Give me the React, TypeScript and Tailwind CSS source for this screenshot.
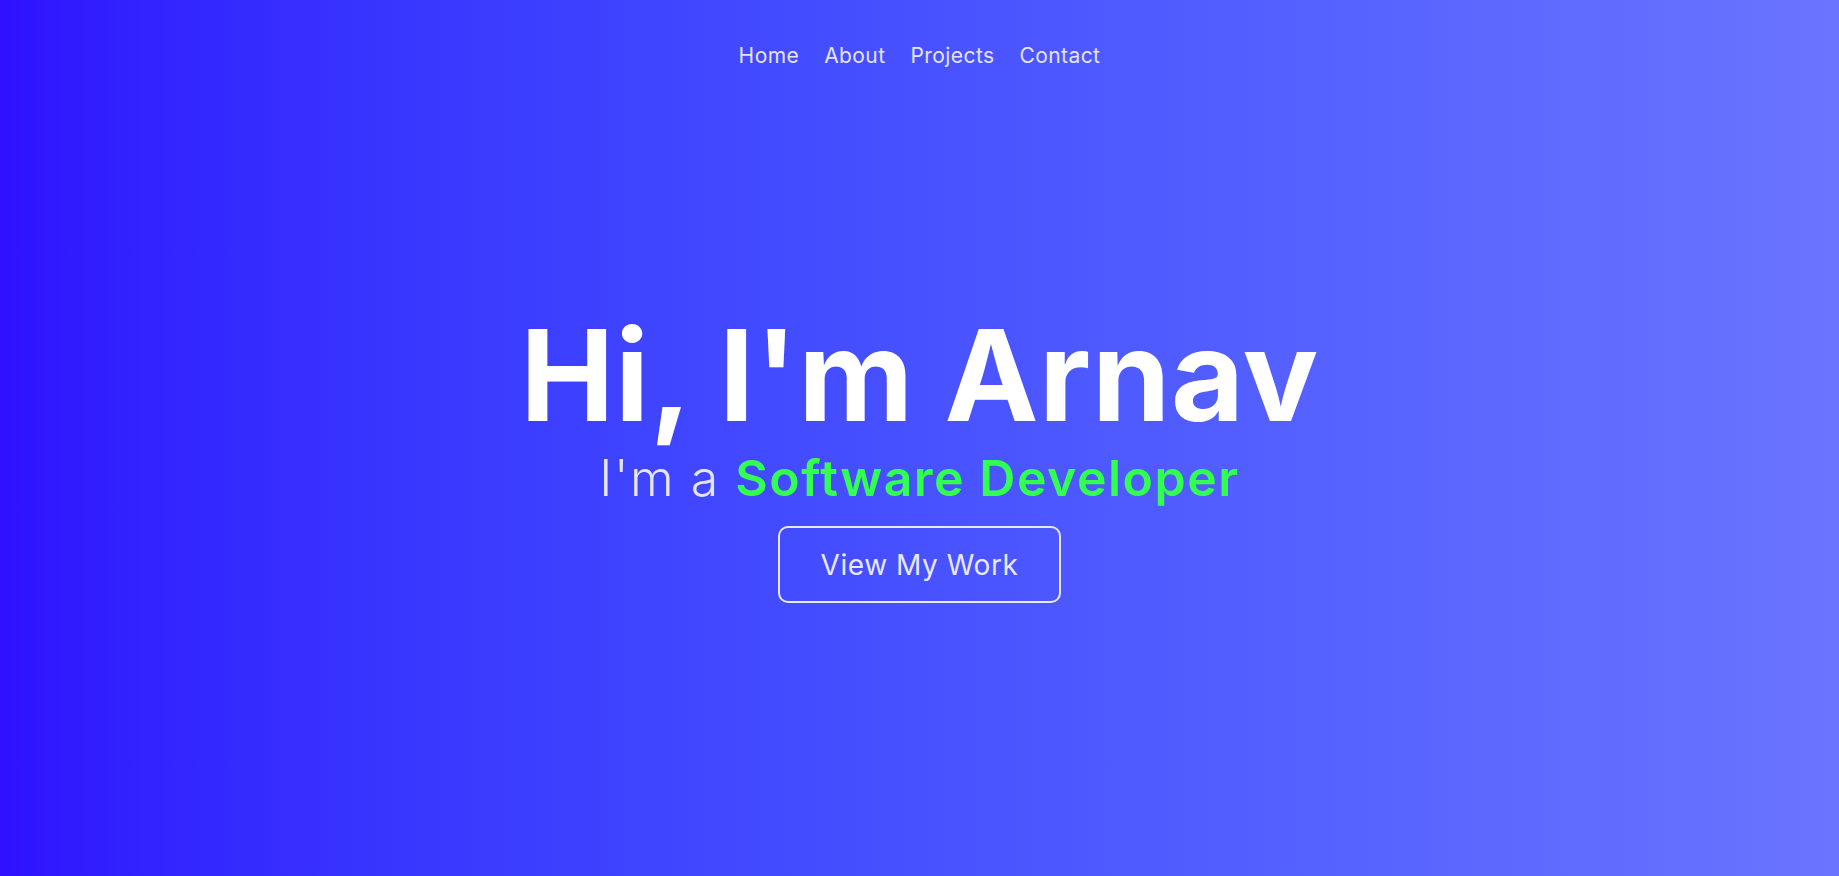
import React from "react";

const font = { fontFamily: "Inter, 'Noto Sans', sans-serif" };

export default function App() {
  return (
    <div
      className="flex h-[876px] w-full flex-col bg-linear-to-r from-[#2f10ff] to-[#6a74ff] text-white"
      style={font}
    >
      <nav className="flex justify-center gap-[25px] pt-[42px] text-[21px] leading-[28px] tracking-[0.02em] text-[#e4e4f4]">
        <a href="#home">Home</a>
        <a href="#about">About</a>
        <a href="#projects">Projects</a>
        <a href="#contact">Contact</a>
      </nav>
      <main className="flex flex-1 flex-col items-center pt-[230px]">
        <h1 className="text-[126px] font-bold leading-[150px] tracking-[0.005em]">Hi, I'm Arnav</h1>
        <p className="mt-0 text-[50px] leading-[56px] tracking-[0.03em] text-[#e4e4f4]">
          <span className="font-light">I'm a </span>
          <span className="font-semibold text-[#33ff50]">Software Developer</span>
        </p>
        <button className="mt-[20px] h-[77px] w-[283px] rounded-[10px] border-2 border-[#e8e8f8] text-[28px] font-normal tracking-[0.02em] text-[#e8e8f8]">
          View My Work
        </button>
      </main>
    </div>
  );
}
